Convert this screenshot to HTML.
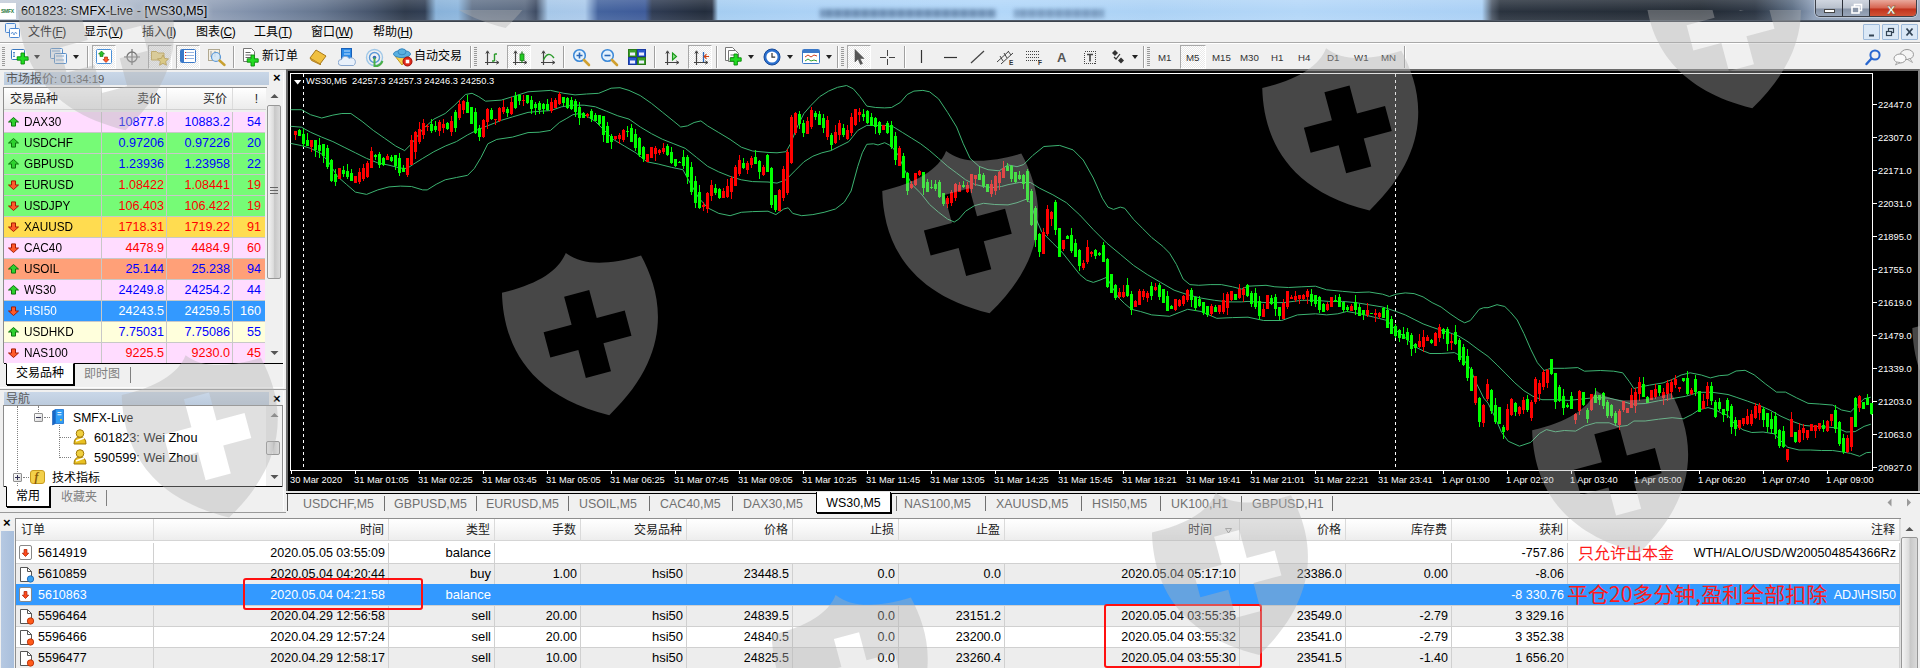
<!DOCTYPE html>
<html lang="zh-CN">
<head>
<meta charset="utf-8">
<title>601823: SMFX-Live - [WS30,M5]</title>
<style>
*{box-sizing:border-box;margin:0;padding:0}
html,body{width:1920px;height:668px;overflow:hidden;background:#f0f0f0}
body{position:relative;font-family:"Liberation Sans","Noto Sans CJK SC",sans-serif;font-size:13px;color:#000}
.abs{position:absolute}
svg{display:block}
/* title bar */
#title{position:absolute;left:0;top:0;width:1920px;height:21px;
 background:linear-gradient(90deg,#c3ccd9 0px,#b4bfd0 100px,#93a1b8 200px,#7a8ba6 260px,#62738d 320px,#43526a 370px,#2a3648 405px,#2c3a50 425px,#86b0d8 436px,#8ab4dc 458px,#5f7088 472px,#58677e 525px,#3a4860 536px,#a4c6e8 548px,#a8c8ea 585px,#40609c 598px,#3a5898 645px,#2b3850 652px,#1e2838 705px,#222c3e 712px,#a3ccf1 718px,#a9d0f5 800px,#b0d6f9 1000px,#aad1f5 1150px,#b2d6f8 1300px,#a8cff5 1482px,#4a5564 1492px,#262f3b 1500px,#1e2630 1700px,#283240 1755px,#56687f 1792px,#8a9cb6 1814px,#9aaac0 1920px)}
#title .gl{position:absolute;left:0;top:0;width:1920px;height:21px;background:linear-gradient(180deg,rgba(255,255,255,.16),rgba(255,255,255,.02) 55%,rgba(255,255,255,.10))}
#title .bl{position:absolute;top:9px;height:9px;background:repeating-linear-gradient(90deg,rgba(40,70,110,.55) 0,rgba(40,70,110,.35) 5px,rgba(40,70,110,.6) 9px);filter:blur(2px)}
#title .ico{position:absolute;left:0;top:3px;width:16px;height:16px;background:#fff}
#title .ico span{position:absolute;left:1px;top:6px;font-size:5px;font-weight:bold;color:#1d7a3c;letter-spacing:-0.3px;line-height:5px}
#title .t{position:absolute;left:21px;top:2px;font-size:12.7px;line-height:18px;color:#000;white-space:nowrap;text-shadow:0 0 6px rgba(255,255,255,.9),0 0 3px rgba(255,255,255,.7)}
#tline{position:absolute;left:0;top:20px;width:1920px;height:2px;background:linear-gradient(180deg,#5c6675,#30363f)}
.capbtns{position:absolute;left:1815px;top:0;width:102px;height:17px;border:1px solid #3c4048;border-top:none;border-radius:0 0 5px 5px;overflow:hidden;box-shadow:0 0 0 1px rgba(255,255,255,.35)}
.capbtns div{position:absolute;top:0;height:17px}
.capbtns .b1{left:0;width:27px;background:linear-gradient(180deg,#d0d6e0,#b8c0cc 48%,#8793a6 52%,#9aa8bc);border-right:1px solid #2c3038}
.capbtns .b2{left:27px;width:27px;background:linear-gradient(180deg,#d0d6e0,#b8c0cc 48%,#8793a6 52%,#9aa8bc);border-right:1px solid #2c3038}
.capbtns .b3{left:54px;width:47px;background:linear-gradient(180deg,#e9a99c,#d6624e 48%,#c0321c 52%,#d4583a)}
/* menu */
#menu{position:absolute;left:0;top:22px;width:1920px;height:21px;background:#f0f0f0;border-bottom:1px solid #a9a9a9}
#menu .mi{position:absolute;top:1px;font-size:12px;line-height:18px;white-space:nowrap}
#menu .mi span{font-size:12px;letter-spacing:-0.5px}
#menu .mi u{text-decoration:underline}
.mdi{position:absolute;top:24px;width:17px;height:16px;border:1px solid #9db9d9;background:#dbe8f6;border-radius:1px}
/* toolbar */
#tb{position:absolute;left:0;top:43px;width:1920px;height:27px;background:#f0f0f0;border-top:1px solid #fff;border-bottom:1px solid #a0a0a0}
.grip{position:absolute;width:3px;background:repeating-linear-gradient(180deg,#9a9a9a 0,#9a9a9a 1px,#f0f0f0 1px,#f0f0f0 2px)}
.tsep{position:absolute;width:2px;border-left:1px solid #a0a0a0;border-right:1px solid #fff}
.pressed{position:absolute;border:1px solid #a8a8a8;background:#e8e8e8;border-right-color:#fff;border-bottom-color:#fff;
 background-image:repeating-conic-gradient(#ffffff 0 25%,#e9e9e9 0 50%);background-size:2px 2px}
.dd{position:absolute;width:0;height:0;border-left:3px solid transparent;border-right:3px solid transparent;border-top:4px solid #222}
.tbt{position:absolute;font-size:12px;line-height:18px;white-space:nowrap}
.tf{position:absolute;top:50.5px;font-size:9.7px;line-height:14px;color:#333;white-space:nowrap}
/* left dock */
.cap{position:absolute;left:4px;width:265px;height:13px;background:linear-gradient(180deg,#c9d7e8,#bccbdd);font-size:12px;line-height:13px;color:#5a5a5a;white-space:nowrap;overflow:visible}
.cap span{position:absolute;left:2px;top:1px}
.cap i{font-style:normal;font-size:11.3px}
.capx{position:absolute;left:273px;font-size:13px;font-weight:bold;line-height:12px;color:#000}
#mwh{position:absolute;left:4px;top:88px;width:262px;height:22px;background:linear-gradient(180deg,#fff,#f3f3f3 60%,#ececec);border-bottom:1px solid #d0d0d0}
#mwh div{position:absolute;top:0;height:21px;line-height:23px;font-size:12px;color:#222;border-right:1px solid #dcdcdc}
.mwr{position:absolute;left:4px;width:261px;height:21px;border-bottom:1px solid #c8c8c8;font-size:12.6px;line-height:20px;white-space:nowrap}
.mwr .ar{position:absolute;left:4px;top:5px}
.mwr .s{position:absolute;left:20px;top:0;display:inline-block;transform:scaleX(.92);transform-origin:0 50%;font-size:12.8px}
.mwr .c{position:absolute;top:0;height:21px;text-align:right;border-left:1px solid #c8c8c8;padding-right:2px}
.mwr .c1{left:97px;width:65px}.mwr .c2{left:162px;width:66px}.mwr .c3{left:228px;width:33px;padding-right:4px}
.sb{position:absolute;background:#f0f0f0}
.thumb{position:absolute;border:1px solid #979797;border-radius:2px;background:linear-gradient(90deg,#f4f4f4,#dcdcdc 45%,#c8c8c8 55%,#dadada)}
.tabs{position:absolute;left:4px;width:279px;height:22px;border-top:1px solid #000;background:#f0f0f0}
.tabs .a{position:absolute;top:-1px;height:22px;background:#fff;border:1px solid #000;border-top:1px solid #fff;font-size:12px;line-height:19px;text-align:center;box-shadow:1px 1px 0 #000}
.tabs .n{position:absolute;top:0;font-size:12px;line-height:20px;color:#808080}
.tabs .v{position:absolute;top:3px;width:1px;height:16px;background:#808080}
#tree{position:absolute;left:4px;top:406px;width:278px;height:80px;background:#fff;overflow:hidden;font-size:13px}
#tree .tx{position:absolute;white-space:nowrap;line-height:16px}
.dot{position:absolute;border-left:1px dotted #808080}
.doth{position:absolute;border-top:1px dotted #808080;height:0}
.box{position:absolute;width:9px;height:9px;border:1px solid #919191;background:linear-gradient(135deg,#fff,#d8d8d8);border-radius:1px}
.box:before{content:"";position:absolute;left:1px;top:3px;width:5px;height:1px;background:#335}
.box.p:after{content:"";position:absolute;left:3px;top:1px;width:1px;height:5px;background:#335}
/* chart */
#chartbg{position:absolute;left:286px;top:69px;width:1634px;height:422px;background:#000;border-left:2px solid #6a6a6a;border-top:2px solid #6a6a6a;border-right:2px solid #8a8a8a}
svg.ch{position:absolute;left:0;top:0}
.ax{font-family:"Liberation Sans",sans-serif;font-size:9.3px;fill:#fff}
/* chart tabs */
#ctabs{position:absolute;left:286px;top:491px;width:1634px;height:23px;background:#f0f0f0;border-top:2px solid #e4e4e4}
#ctabs:after{content:"";position:absolute;left:0;top:0;width:1634px;height:1px;background:#000}
.ctab{position:absolute;top:495.5px;font-size:12.4px;line-height:17px;color:#707070;white-space:nowrap}
.ctab.act{top:492px;height:21px;background:#fff;border:1px solid #000;border-top:none;color:#000;text-align:center;box-shadow:1px 1px 0 #000}
.ctab.act span{position:relative;top:3px}
.csep{position:absolute;top:496px;width:1px;height:15px;background:#707070}
/* terminal */
#term{position:absolute;left:0;top:515px;width:1920px;height:153px;background:#f0f0f0}
.th{position:absolute;top:519px;height:22px;line-height:23px;font-size:12px;color:#222;background:linear-gradient(180deg,#fff,#f6f6f6 55%,#ededed);border-right:1px solid #dadada;border-bottom:1px solid #d5d5d5;white-space:nowrap}
.tr{position:absolute;left:16px;width:1884px;height:21px;border-bottom:1px solid #d0d0d0;font-size:12.5px;line-height:20px;white-space:nowrap}
.tr .tx13{font-size:13px}
.tr.sel .td{border-right-color:transparent}
.td{position:absolute;top:0;height:20px;text-align:right;padding-right:3px;border-right:1px solid #d0d0d0;overflow:visible}
.ti{position:absolute;left:3px;top:2px}
.note{position:absolute;color:#ff1a1a;line-height:20px;white-space:nowrap;font-family:"Noto Sans CJK SC","Liberation Sans",sans-serif}
.rb{position:absolute;border:2px solid #ff1010;border-radius:3px}
svg.wm{position:absolute;left:0;top:0;pointer-events:none}
</style>
</head>
<body>
<!-- title bar -->
<div id="title"><div class="bl" style="left:820px;width:176px"></div><div class="bl" style="left:1014px;width:90px;opacity:.8"></div><div class="gl"></div><div class="ico"><span>SMFX</span></div><div class="t">601823: SMFX-Live - [WS30,M5]</div>
 <div class="capbtns"><div class="b1"></div><div class="b2"></div><div class="b3"></div>
 <svg class="abs" style="left:0;top:0" width="102" height="17" viewBox="0 0 102 17"><rect x="8.5" y="9.5" width="10" height="3" fill="#fff" stroke="#444"/><rect x="38.5" y="4.5" width="7" height="6" fill="none" stroke="#fff" stroke-width="1.6"/><rect x="36" y="7" width="7" height="6" fill="#8a96a8" stroke="#fff" stroke-width="1.6"/><text x="71" y="14" font-family="Liberation Sans,sans-serif" font-weight="bold" font-size="15" fill="#fff" stroke="#552" stroke-width="0.4">x</text></svg></div>
</div>
<div id="tline"></div>
<!-- menu -->
<div id="menu">
 <svg class="abs" style="left:5px;top:1px" width="16" height="16" viewBox="0 0 16 16"><rect x="0.5" y="0.5" width="10" height="9" rx="1" fill="#eaf2fb" stroke="#4a86d0"/><rect x="4.5" y="5.5" width="10" height="9" rx="1" fill="#fff" stroke="#4a86d0"/><path d="M6,11 l1.5,-2 1.5,3 1.5,-3 1.5,2" stroke="#4a86d0" fill="none" stroke-width="0.8"/></svg>
 <div class="mi" style="left:28px">文件<span>(<u>F</u>)</span></div>
 <div class="mi" style="left:84px">显示<span>(<u>V</u>)</span></div>
 <div class="mi" style="left:142px">插入<span>(<u>I</u>)</span></div>
 <div class="mi" style="left:196px">图表<span>(<u>C</u>)</span></div>
 <div class="mi" style="left:254px">工具<span>(<u>T</u>)</span></div>
 <div class="mi" style="left:311px">窗口<span>(<u>W</u>)</span></div>
 <div class="mi" style="left:373px">帮助<span>(<u>H</u>)</span></div>
</div>
<div class="mdi" style="left:1863px"><svg width="15" height="14"><path d="M5,10.5h5" stroke="#345" stroke-width="2"/></svg></div>
<div class="mdi" style="left:1882px"><svg width="15" height="14"><rect x="5.5" y="3.5" width="5" height="4" fill="none" stroke="#345" stroke-width="1.2"/><rect x="3.5" y="6.5" width="5" height="4" fill="#dbe8f6" stroke="#345" stroke-width="1.2"/></svg></div>
<div class="mdi" style="left:1901px"><svg width="15" height="14"><path d="M4.5,3.5l6,7M10.5,3.5l-6,7" stroke="#345" stroke-width="1.8"/></svg></div>
<!-- toolbar -->
<div id="tb"></div>
<div class="grip" style="left:2px;top:47px;height:19px"></div>
<svg style="position:absolute;left:11px;top:48px" width="20" height="18" viewBox="0 0 20 18"><rect x="0.5" y="1.5" width="13" height="10" rx="1" fill="#fff" stroke="#3a78c0"/><path d="M3,4v5M2,5l1,-1l1,1M2,8l1,1l1,-1" stroke="#3a78c0" fill="none" stroke-width="0.8"/><path d="M10,5h3.4v3.8h3.8v3.4h-3.8v3.8h-3.4v-3.8h-3.8v-3.4h3.8z" fill="#22dc22" stroke="#0a8a0a" stroke-width="0.9"/></svg>
<div class="dd" style="left:34px;top:55px"></div>
<svg style="position:absolute;left:50px;top:48px" width="18" height="18" viewBox="0 0 18 18"><rect x="0.5" y="0.5" width="12" height="10" rx="1" fill="#eef4fb" stroke="#5a8fc8"/><rect x="4.5" y="5.5" width="12" height="10" rx="1" fill="#eef4fb" stroke="#5a8fc8"/><path d="M2,3h8M6,8h8M6,12h8" stroke="#5a8fc8" stroke-width="0.8"/></svg>
<div class="dd" style="left:73px;top:55px"></div>
<div class="tsep" style="left:87px;top:46px;height:22px"></div>
<div class="pressed" style="left:92px;top:45px;width:24px;height:24px"></div>
<svg style="position:absolute;left:96px;top:49px" width="17" height="16" viewBox="0 0 17 16"><rect x="0.5" y="0.5" width="15" height="14" rx="1" fill="#fff" stroke="#4a90d8"/><path d="M5.5,2 L8.5,5 H7 V7.5 H4 V5 H2.5 Z" fill="#2ec02e" stroke="#0a700a" stroke-width="0.6"/><path d="M10,13.5 L13,10.5 H11.5 V8 H8.5 V10.5 H7 Z" fill="#ff5a2a" stroke="#a02000" stroke-width="0.6"/></svg>
<svg style="position:absolute;left:124px;top:49px" width="16" height="16" viewBox="0 0 16 16"><circle cx="8" cy="8" r="5" fill="none" stroke="#777" stroke-width="1.3"/><path d="M8,0v16M0,8h16" stroke="#777" stroke-width="1.2"/></svg>
<div class="pressed" style="left:148px;top:45px;width:24px;height:24px"></div>
<svg style="position:absolute;left:151px;top:48px" width="19" height="18" viewBox="0 0 19 18"><path d="M0.5,3.5 h5 l1.5,1.5 h6 v7 h-12.5 z" fill="#f3dc8a" stroke="#c8a84a"/><path d="M12,7 l1.7,3.4 3.8,0.5 -2.8,2.6 0.7,3.7 -3.4,-1.8 -3.4,1.8 0.7,-3.7 -2.8,-2.6 3.8,-0.5z" fill="#f5d96a" stroke="#b8902a" stroke-width="0.8"/></svg>
<div class="pressed" style="left:176px;top:45px;width:24px;height:24px"></div>
<svg style="position:absolute;left:180px;top:49px" width="17" height="15" viewBox="0 0 17 15"><rect x="0.5" y="0.5" width="15" height="13" rx="1" fill="#fff" stroke="#3a78c8"/><rect x="1" y="1" width="3" height="12" fill="#3a78c8"/><path d="M6,3.5h8M6,6.5h8M6,9.5h8" stroke="#7aa0d8" stroke-width="0.8"/><path d="M5,3.5h1M5,6.5h1M5,9.5h1" stroke="#e02020" stroke-width="1"/></svg>
<svg style="position:absolute;left:207px;top:48px" width="20" height="19" viewBox="0 0 20 19"><rect x="1.5" y="1.5" width="11" height="11" fill="#f4f0e6" stroke="#b0a890"/><path d="M4,3v6M8,3v6" stroke="#888" stroke-width="0.8"/><circle cx="9" cy="9" r="4.5" fill="#cfe6fa" fill-opacity="0.8" stroke="#5a98d8" stroke-width="1.2"/><path d="M12.5,12.5 L17.5,17" stroke="#c8a030" stroke-width="2.4" stroke-linecap="round"/></svg>
<div class="tsep" style="left:233px;top:46px;height:22px"></div>
<svg style="position:absolute;left:243px;top:48px" width="18" height="20" viewBox="0 0 18 20"><path d="M0.5,0.5 h8 l3,3 v10 h-11 z" fill="#fff" stroke="#777"/><path d="M2.5,4.5h5M2.5,7h6M2.5,9.5h6" stroke="#555" stroke-width="0.9"/><path d="M8,7h3.4v3.8h3.8v3.4h-3.8v3.8h-3.4v-3.8h-3.8v-3.4h3.8z" fill="#22dc22" stroke="#0a8a0a" stroke-width="0.9"/></svg>
<div class="tbt" style="left:262px;top:47px">新订单</div>
<svg style="position:absolute;left:309px;top:49px" width="18" height="16" viewBox="0 0 18 16"><path d="M1,9 L7,1 L17,7 L11,15 Z" fill="#f0c040" stroke="#a87818"/><path d="M1,9 L2.5,11.5 L12,16 L11,15" fill="#d09828" stroke="#a87818" stroke-width="0.8"/></svg>
<svg style="position:absolute;left:338px;top:48px" width="19" height="19" viewBox="0 0 19 19"><rect x="3.5" y="0.5" width="10" height="12" fill="#2a8ae8" stroke="#1a60b8"/><path d="M6,3h6M6,6h6" stroke="#bfe0ff" stroke-width="1"/><path d="M3,17.5 a3,3 0 0 1 0.5,-6 a4,4 0 0 1 7.5,-1 a3.5,3.5 0 0 1 4.5,7 z" fill="#e8f0fa" stroke="#8aa8d0"/></svg>
<svg style="position:absolute;left:365px;top:48px" width="19" height="19" viewBox="0 0 19 19"><circle cx="9.5" cy="9.5" r="8" fill="none" stroke="#a0c8e8" stroke-width="1.4"/><circle cx="9.5" cy="9.5" r="5" fill="none" stroke="#5a98d8" stroke-width="1.4"/><circle cx="9.5" cy="9.5" r="1.8" fill="#2a60c0"/><path d="M9.5,9.5 V18.5 A9,9 0 0 0 17.5,13" fill="none" stroke="#48b048" stroke-width="2"/></svg>
<svg style="position:absolute;left:393px;top:47px" width="20" height="20" viewBox="0 0 20 20"><path d="M2,9 L9,18 L16,9 Z" fill="#f5d050" stroke="#c09820"/><ellipse cx="9" cy="7" rx="8.5" ry="3.6" fill="#5ab0e0" stroke="#3888c0"/><ellipse cx="9" cy="4.8" rx="4" ry="3" fill="#5ab0e0" stroke="#3888c0"/><circle cx="14.5" cy="14.5" r="4.5" fill="#e02818" stroke="#a01008"/><rect x="12.7" y="12.7" width="3.6" height="3.6" fill="#fff"/></svg>
<div class="tbt" style="left:414px;top:47px">自动交易</div>
<div class="tsep" style="left:470px;top:46px;height:22px"></div>
<div class="grip" style="left:474px;top:47px;height:19px"></div>
<svg style="position:absolute;left:484px;top:49px" width="17" height="17" viewBox="0 0 17 17"><path d="M3.5,2.5V16M1,13.5H14.5" stroke="#444" stroke-width="1.2" fill="none"/><path d="M1.8,4.6L3.5,1.8L5.2,4.6M12.2,11.8L15,13.5L12.2,15.2" stroke="#444" stroke-width="1" fill="none"/><path d="M10.5,5V12M8,12h2.5M10.5,5h2.5" stroke="#2a9a2a" stroke-width="1.4" fill="none"/></svg>
<div class="pressed" style="left:507px;top:45px;width:24px;height:24px"></div>
<svg style="position:absolute;left:512px;top:49px" width="17" height="17" viewBox="0 0 17 17"><path d="M3.5,2.5V16M1,13.5H14.5" stroke="#444" stroke-width="1.2" fill="none"/><path d="M1.8,4.6L3.5,1.8L5.2,4.6M12.2,11.8L15,13.5L12.2,15.2" stroke="#444" stroke-width="1" fill="none"/><path d="M10,2.5V14" stroke="#1a7a1a" stroke-width="1.2"/><rect x="8" y="5" width="4" height="6.5" fill="#22cc22" stroke="#1a7a1a" stroke-width="0.8"/></svg>
<svg style="position:absolute;left:540px;top:49px" width="17" height="17" viewBox="0 0 17 17"><path d="M3.5,2.5V16M1,13.5H14.5" stroke="#444" stroke-width="1.2" fill="none"/><path d="M1.8,4.6L3.5,1.8L5.2,4.6M12.2,11.8L15,13.5L12.2,15.2" stroke="#444" stroke-width="1" fill="none"/><path d="M3.5,11 Q8,1 14,9" stroke="#2a9a2a" stroke-width="1.3" fill="none"/></svg>
<div class="tsep" style="left:563px;top:46px;height:22px"></div>
<svg style="position:absolute;left:572px;top:48px" width="19" height="19" viewBox="0 0 19 19"><circle cx="7.5" cy="7.5" r="5.8" fill="#e4f2fd" stroke="#3a88d8" stroke-width="1.5"/><path d="M4.5,7.5h6M7.5,4.5v6" stroke="#2a68b8" stroke-width="1.6"/><path d="M12,12 L17,17" stroke="#d0a030" stroke-width="2.6" stroke-linecap="round"/></svg>
<svg style="position:absolute;left:600px;top:48px" width="19" height="19" viewBox="0 0 19 19"><circle cx="7.5" cy="7.5" r="5.8" fill="#e4f2fd" stroke="#3a88d8" stroke-width="1.5"/><path d="M4.5,7.5h6" stroke="#2a68b8" stroke-width="1.6"/><path d="M12,12 L17,17" stroke="#d0a030" stroke-width="2.6" stroke-linecap="round"/></svg>
<svg style="position:absolute;left:628px;top:49px" width="18" height="16" viewBox="0 0 18 16"><rect x="0.5" y="0.5" width="8" height="7" fill="#3aa02a" stroke="#2a7a1a"/><rect x="9.5" y="0.5" width="8" height="7" fill="#2a58d0" stroke="#1a3aa0"/><rect x="0.5" y="8.5" width="8" height="7" fill="#2a58d0" stroke="#1a3aa0"/><rect x="9.5" y="8.5" width="8" height="7" fill="#3aa02a" stroke="#2a7a1a"/><rect x="2" y="3.5" width="5" height="3" fill="#eef"/><rect x="11" y="3.5" width="5" height="3" fill="#eef"/><rect x="2" y="11.5" width="5" height="3" fill="#eef"/><rect x="11" y="11.5" width="5" height="3" fill="#eef"/></svg>
<div class="tsep" style="left:654px;top:46px;height:22px"></div>
<svg style="position:absolute;left:664px;top:49px" width="17" height="17" viewBox="0 0 17 17"><path d="M3.5,2.5V16M1,13.5H14.5" stroke="#444" stroke-width="1.2" fill="none"/><path d="M1.8,4.6L3.5,1.8L5.2,4.6M12.2,11.8L15,13.5L12.2,15.2" stroke="#444" stroke-width="1" fill="none"/><path d="M8.5,4 L12.5,7.5 L8.5,11 Z" fill="#8ae08a" stroke="#1a9a1a" stroke-width="1.1"/></svg>
<div class="pressed" style="left:688px;top:45px;width:24px;height:24px"></div>
<svg style="position:absolute;left:693px;top:49px" width="17" height="17" viewBox="0 0 17 17"><path d="M3.5,2.5V16M1,13.5H14.5" stroke="#444" stroke-width="1.2" fill="none"/><path d="M1.8,4.6L3.5,1.8L5.2,4.6M12.2,11.8L15,13.5L12.2,15.2" stroke="#444" stroke-width="1" fill="none"/><path d="M10.5,3V13" stroke="#2a68b8" stroke-width="1.3"/><path d="M16,7.5h-4.5M13.5,5.2l-2.3,2.3l2.3,2.3" stroke="#d04010" fill="none" stroke-width="1.1"/></svg>
<div class="tsep" style="left:716px;top:46px;height:22px"></div>
<svg style="position:absolute;left:725px;top:47px" width="19" height="20" viewBox="0 0 19 20"><path d="M0.5,0.5 h7 l3,3 v10 h-10 z" fill="#fff" stroke="#777"/><path d="M3.5,3.5 h7 l3,3 v8 h-10 z" fill="#fff" stroke="#777"/><path d="M5.5,8h5M5.5,10.5h6" stroke="#666" stroke-width="0.9"/><path d="M9,7h3.4v3.8h3.8v3.4h-3.8v3.8h-3.4v-3.8h-3.8v-3.4h3.8z" fill="#22dc22" stroke="#0a8a0a" stroke-width="0.9"/></svg>
<div class="dd" style="left:748px;top:55px"></div>
<svg style="position:absolute;left:763px;top:48px" width="18" height="18" viewBox="0 0 18 18"><circle cx="9" cy="9" r="8" fill="#2a70d0" stroke="#184a98"/><circle cx="9" cy="9" r="5.6" fill="#fff"/><path d="M9,5v4.2h3.2" stroke="#333" fill="none" stroke-width="1.2"/></svg>
<div class="dd" style="left:787px;top:55px"></div>
<svg style="position:absolute;left:802px;top:49px" width="18" height="16" viewBox="0 0 18 16"><rect x="0.5" y="0.5" width="17" height="14" rx="1" fill="#fff" stroke="#3a78c8"/><rect x="1" y="1" width="16" height="3" fill="#3a78c8"/><path d="M3,8 l3,-2 3,2 3,-2 3,1" stroke="#d04020" fill="none"/><path d="M3,12 l3,-2 3,2 3,-1 3,1" stroke="#30a030" fill="none"/></svg>
<div class="dd" style="left:826px;top:55px"></div>
<div class="tsep" style="left:837px;top:46px;height:22px"></div>
<div class="grip" style="left:841px;top:47px;height:19px"></div>
<div class="pressed" style="left:847px;top:45px;width:24px;height:24px"></div>
<svg style="position:absolute;left:854px;top:49px" width="12" height="17" viewBox="0 0 12 17"><path d="M1,0.5 V13 L4,10 L6.5,15.5 L8.5,14.5 L6,9.5 H10 Z" fill="#555" stroke="#555" stroke-width="0.6"/></svg>
<svg style="position:absolute;left:879px;top:49px" width="16" height="16" viewBox="0 0 16 16"><path d="M8.5,1v6M8.5,10v6M1,8.5h6M10,8.5h6" stroke="#444" stroke-width="1"/></svg>
<div class="tsep" style="left:904px;top:46px;height:22px"></div>
<svg style="position:absolute;left:918px;top:49px" width="8" height="16" viewBox="0 0 8 16"><path d="M3.5,1v13" stroke="#333" stroke-width="1.2"/></svg>
<svg style="position:absolute;left:943px;top:49px" width="16" height="16" viewBox="0 0 16 16"><path d="M1,8.5h13" stroke="#333" stroke-width="1.2"/></svg>
<svg style="position:absolute;left:970px;top:49px" width="16" height="16" viewBox="0 0 16 16"><path d="M1,14L14,2" stroke="#444" stroke-width="1.2"/></svg>
<svg style="position:absolute;left:996px;top:48px" width="20" height="18" viewBox="0 0 20 18"><path d="M1,14L13,3M5,16L17,5M4,8l3,5M8,5l3,5M12,3l3,4" stroke="#444" stroke-width="1" fill="none"/><text x="13" y="17" font-size="6.5" font-family="Liberation Sans,sans-serif" font-weight="bold" fill="#333">E</text></svg>
<svg style="position:absolute;left:1025px;top:48px" width="20" height="18" viewBox="0 0 20 18"><path d="M1,3.5h14M1,6.5h14M1,9.5h14M1,12.5h14" stroke="#444" stroke-width="1" stroke-dasharray="1,1" shape-rendering="crispEdges"/><text x="13" y="17" font-size="6.5" font-family="Liberation Sans,sans-serif" font-weight="bold" fill="#333">F</text></svg>
<div class="tbt" style="left:1057px;top:49px;font-size:13px;font-weight:bold;color:#555">A</div>
<svg style="position:absolute;left:1082px;top:49px" width="16" height="16" viewBox="0 0 16 16"><rect x="2.5" y="2.5" width="11" height="12" fill="none" stroke="#444" stroke-dasharray="1,1" shape-rendering="crispEdges"/><path d="M5,5.5h6M8,5.5v7" stroke="#444" stroke-width="1.6"/></svg>
<svg style="position:absolute;left:1110px;top:49px" width="18" height="16" viewBox="0 0 18 16"><path d="M5,1 L8,4 L5,7 L2,4 Z" fill="#333"/><path d="M11,8.5 L14,11.5 L11,14.5 L8,11.5 Z" fill="#333"/><path d="M4,8l2,2l4,-5" stroke="#333" fill="none" stroke-width="1.2"/></svg>
<div class="dd" style="left:1132px;top:55px"></div>
<div class="tsep" style="left:1143px;top:46px;height:22px"></div>
<div class="grip" style="left:1147px;top:47px;height:19px"></div>
<div class="pressed" style="left:1180px;top:45px;width:26px;height:24px"></div>
<div class="tf" style="left:1158px">M1</div>
<div class="tf" style="left:1186px">M5</div>
<div class="tf" style="left:1212px">M15</div>
<div class="tf" style="left:1240px">M30</div>
<div class="tf" style="left:1271px">H1</div>
<div class="tf" style="left:1298px">H4</div>
<div class="tf" style="left:1327px">D1</div>
<div class="tf" style="left:1354px">W1</div>
<div class="tf" style="left:1381px">MN</div>
<div class="tsep" style="left:1404px;top:46px;height:22px"></div>
<svg style="position:absolute;left:1865px;top:49px" width="17" height="17" viewBox="0 0 17 17"><circle cx="10" cy="6" r="4.6" fill="none" stroke="#2a68d0" stroke-width="2"/><path d="M6.5,9.5L1.5,15" stroke="#2a68d0" stroke-width="2.4" stroke-linecap="round"/></svg>
<svg style="position:absolute;left:1893px;top:48px" width="22" height="18" viewBox="0 0 22 18"><ellipse cx="14" cy="6.5" rx="6.5" ry="5" fill="#f4f4f4" stroke="#999"/><path d="M17,10.5l2.5,4l-5,-3z" fill="#f4f4f4" stroke="#999" stroke-width="0.8"/><ellipse cx="7" cy="10.5" rx="6" ry="4.5" fill="#fafafa" stroke="#999"/><path d="M4,14l-1.5,3l4.5,-2.5z" fill="#fafafa" stroke="#999" stroke-width="0.8"/></svg>
<!-- market watch -->
<div class="cap" style="top:72px"><span>市场报价<i>: 01:34:19</i></span></div>
<div class="capx" style="top:72px">×</div>
<div id="mwh"><div style="left:0;width:98px;padding-left:6px">交易品种</div><div style="left:98px;width:65px;text-align:right;padding-right:5px">卖价</div><div style="left:163px;width:66px;text-align:right;padding-right:5px">买价</div><div style="left:229px;width:33px;text-align:right;padding-right:8px;border-right:none">!</div></div>
<div class="mwr" style="top:112px;background:#ffdcff;color:#0000ff"><svg class="ar" width="11" height="10" viewBox="0 0 11 11" preserveAspectRatio="none"><path d="M5.5,0.5 L10.5,5.5 H7.5 V10 H3.5 V5.5 H0.5 Z" fill="#2fd02f" stroke="#0a6e0a" stroke-width="1"/></svg><span class="s" style="color:#000000">DAX30</span><span class="c c1">10877.8</span><span class="c c2">10883.2</span><span class="c c3">54</span></div>
<div class="mwr" style="top:133px;background:#76fb76;color:#0000ff"><svg class="ar" width="11" height="10" viewBox="0 0 11 11" preserveAspectRatio="none"><path d="M5.5,0.5 L10.5,5.5 H7.5 V10 H3.5 V5.5 H0.5 Z" fill="#2fd02f" stroke="#0a6e0a" stroke-width="1"/></svg><span class="s" style="color:#000000">USDCHF</span><span class="c c1">0.97206</span><span class="c c2">0.97226</span><span class="c c3">20</span></div>
<div class="mwr" style="top:154px;background:#76fb76;color:#0000ff"><svg class="ar" width="11" height="10" viewBox="0 0 11 11" preserveAspectRatio="none"><path d="M5.5,0.5 L10.5,5.5 H7.5 V10 H3.5 V5.5 H0.5 Z" fill="#2fd02f" stroke="#0a6e0a" stroke-width="1"/></svg><span class="s" style="color:#000000">GBPUSD</span><span class="c c1">1.23936</span><span class="c c2">1.23958</span><span class="c c3">22</span></div>
<div class="mwr" style="top:175px;background:#76fb76;color:#ff0000"><svg class="ar" width="11" height="10" viewBox="0 0 11 11" preserveAspectRatio="none"><path d="M5.5,10.5 L10.5,5.5 H7.5 V1 H3.5 V5.5 H0.5 Z" fill="#ff5a2a" stroke="#a01800" stroke-width="1"/></svg><span class="s" style="color:#000000">EURUSD</span><span class="c c1">1.08422</span><span class="c c2">1.08441</span><span class="c c3">19</span></div>
<div class="mwr" style="top:196px;background:#76fb76;color:#ff0000"><svg class="ar" width="11" height="10" viewBox="0 0 11 11" preserveAspectRatio="none"><path d="M5.5,10.5 L10.5,5.5 H7.5 V1 H3.5 V5.5 H0.5 Z" fill="#ff5a2a" stroke="#a01800" stroke-width="1"/></svg><span class="s" style="color:#000000">USDJPY</span><span class="c c1">106.403</span><span class="c c2">106.422</span><span class="c c3">19</span></div>
<div class="mwr" style="top:217px;background:#ffdc50;color:#ff0000"><svg class="ar" width="11" height="10" viewBox="0 0 11 11" preserveAspectRatio="none"><path d="M5.5,10.5 L10.5,5.5 H7.5 V1 H3.5 V5.5 H0.5 Z" fill="#ff5a2a" stroke="#a01800" stroke-width="1"/></svg><span class="s" style="color:#000000">XAUUSD</span><span class="c c1">1718.31</span><span class="c c2">1719.22</span><span class="c c3">91</span></div>
<div class="mwr" style="top:238px;background:#ffdcff;color:#ff0000"><svg class="ar" width="11" height="10" viewBox="0 0 11 11" preserveAspectRatio="none"><path d="M5.5,10.5 L10.5,5.5 H7.5 V1 H3.5 V5.5 H0.5 Z" fill="#ff5a2a" stroke="#a01800" stroke-width="1"/></svg><span class="s" style="color:#000000">CAC40</span><span class="c c1">4478.9</span><span class="c c2">4484.9</span><span class="c c3">60</span></div>
<div class="mwr" style="top:259px;background:#ffa078;color:#0000ff"><svg class="ar" width="11" height="10" viewBox="0 0 11 11" preserveAspectRatio="none"><path d="M5.5,0.5 L10.5,5.5 H7.5 V10 H3.5 V5.5 H0.5 Z" fill="#2fd02f" stroke="#0a6e0a" stroke-width="1"/></svg><span class="s" style="color:#000000">USOIL</span><span class="c c1">25.144</span><span class="c c2">25.238</span><span class="c c3">94</span></div>
<div class="mwr" style="top:280px;background:#ffdcff;color:#0000ff"><svg class="ar" width="11" height="10" viewBox="0 0 11 11" preserveAspectRatio="none"><path d="M5.5,0.5 L10.5,5.5 H7.5 V10 H3.5 V5.5 H0.5 Z" fill="#2fd02f" stroke="#0a6e0a" stroke-width="1"/></svg><span class="s" style="color:#000000">WS30</span><span class="c c1">24249.8</span><span class="c c2">24254.2</span><span class="c c3">44</span></div>
<div class="mwr" style="top:301px;background:#3399ff;color:#ffffff"><svg class="ar" width="11" height="10" viewBox="0 0 11 11" preserveAspectRatio="none"><path d="M5.5,10.5 L10.5,5.5 H7.5 V1 H3.5 V5.5 H0.5 Z" fill="#ff5a2a" stroke="#a01800" stroke-width="1"/></svg><span class="s" style="color:#ffffff">HSI50</span><span class="c c1">24243.5</span><span class="c c2">24259.5</span><span class="c c3">160</span></div>
<div class="mwr" style="top:322px;background:#ffffdc;color:#0000ff"><svg class="ar" width="11" height="10" viewBox="0 0 11 11" preserveAspectRatio="none"><path d="M5.5,0.5 L10.5,5.5 H7.5 V10 H3.5 V5.5 H0.5 Z" fill="#2fd02f" stroke="#0a6e0a" stroke-width="1"/></svg><span class="s" style="color:#000000">USDHKD</span><span class="c c1">7.75031</span><span class="c c2">7.75086</span><span class="c c3">55</span></div>
<div class="mwr" style="top:343px;background:#ffdcff;color:#ff0000"><svg class="ar" width="11" height="10" viewBox="0 0 11 11" preserveAspectRatio="none"><path d="M5.5,10.5 L10.5,5.5 H7.5 V1 H3.5 V5.5 H0.5 Z" fill="#ff5a2a" stroke="#a01800" stroke-width="1"/></svg><span class="s" style="color:#000000">NAS100</span><span class="c c1">9225.5</span><span class="c c2">9230.0</span><span class="c c3">45</span></div>
<div class="sb" style="left:267px;top:88px;width:15px;height:275px"></div>
<svg class="abs" style="left:270px;top:93px" width="9" height="6"><path d="M0.5,5 L4.5,1 L8.5,5 Z" fill="#555"/></svg>
<svg class="abs" style="left:270px;top:350px" width="9" height="6"><path d="M0.5,1 L4.5,5 L8.5,1 Z" fill="#555"/></svg>
<div class="thumb" style="left:267px;top:105px;width:14px;height:174px"></div>
<div class="abs" style="left:270px;top:187px;width:8px;height:7px;background:repeating-linear-gradient(180deg,#666 0,#666 1px,transparent 1px,transparent 3px)"></div>
<div class="tabs" style="top:363px"><div class="a" style="left:2px;width:68px">交易品种</div><div class="n" style="left:80px">即时图</div><div class="v" style="left:126px"></div></div>
<!-- navigator -->
<div class="cap" style="top:392px"><span>导航</span></div>
<div class="capx" style="top:393px">×</div>
<div id="tree">
 <div class="dot" style="left:13px;top:0;height:80px"></div>
 <div class="dot" style="left:34px;top:0;height:8px"></div>
 <div class="box" style="left:30px;top:7px"></div><div class="doth" style="left:40px;top:11px;width:6px"></div>
 <svg class="abs" style="left:48px;top:3px" width="13" height="17" viewBox="0 0 13 17"><path d="M0.5,2 L3.5,0.5 V14.5 L0.5,16 Z" fill="#1668c8" stroke="#1458b0" stroke-width="0.6"/><path d="M3.5,0.5 H11.5 V14.5 H3.5 Z" fill="#2f9df5" stroke="#1a70d0" stroke-width="0.8"/><path d="M5.5,3.5h4M5.5,5.8h4" stroke="#e8f4ff" stroke-width="1.1"/><rect x="8" y="10" width="1.8" height="1.8" fill="#f5c830"/></svg>
 <div class="tx" style="left:69px;top:4px;font-size:12.2px">SMFX-Live</div>
 <div class="dot" style="left:55px;top:19px;height:33px"></div>
 <div class="doth" style="left:56px;top:31px;width:11px"></div><div class="doth" style="left:56px;top:51px;width:11px"></div>
 <svg class="abs" style="left:69px;top:23px" width="14" height="16" viewBox="0 0 14 16"><path d="M1,15 Q1,8 7,8 Q13,8 13,15 Z" fill="#e8c020" stroke="#a07808"/><circle cx="7" cy="4.5" r="3.8" fill="#f0d040" stroke="#a07808"/><path d="M3,12 l8,-3" stroke="#fff" stroke-width="1.5"/></svg>
 <div class="tx" style="left:90px;top:24px;font-size:12.7px">601823: Wei Zhou</div>
 <svg class="abs" style="left:69px;top:43px" width="14" height="16" viewBox="0 0 14 16"><path d="M1,15 Q1,8 7,8 Q13,8 13,15 Z" fill="#e8c020" stroke="#a07808"/><circle cx="7" cy="4.5" r="3.8" fill="#f0d040" stroke="#a07808"/><path d="M3,12 l8,-3" stroke="#fff" stroke-width="1.5"/></svg>
 <div class="tx" style="left:90px;top:44px;font-size:12.7px">590599: Wei Zhou</div>
 <div class="box p" style="left:9px;top:67px"></div><div class="doth" style="left:19px;top:71px;width:6px"></div>
 <svg class="abs" style="left:26px;top:64px" width="15" height="15" viewBox="0 0 15 15"><rect x="0.5" y="0.5" width="14" height="13" rx="2.5" fill="#f3d04a" stroke="#c89c20"/><text x="4.6" y="10.6" font-family="Liberation Serif,serif" font-style="italic" font-weight="bold" font-size="11.5" fill="#8a5a08">f</text></svg>
 <div class="tx" style="left:48px;top:64px;font-size:12px">技术指标</div>
 <div class="sb" style="left:262px;top:0;width:16px;height:80px"></div>
 <svg class="abs" style="left:266px;top:6px" width="9" height="6"><path d="M0.5,5 L4.5,1 L8.5,5 Z" fill="#777"/></svg>
 <svg class="abs" style="left:266px;top:68px" width="9" height="6"><path d="M0.5,1 L4.5,5 L8.5,1 Z" fill="#555"/></svg>
 <div class="thumb" style="left:262px;top:35px;width:14px;height:14px"></div>
</div>
<div class="tabs" style="top:486px"><div class="a" style="left:2px;width:44px;height:21px">常用</div><div class="n" style="left:57px">收藏夹</div><div class="v" style="left:102px"></div></div>
<!-- dock lines -->
<div class="abs" style="left:0;top:389px;width:286px;height:1px;background:#9a9a9a"></div>
<div class="abs" style="left:0;top:387px;width:284px;height:1px;background:#fcfcfc"></div>
<div class="abs" style="left:283px;top:72px;width:1px;height:316px;background:#fcfcfc"></div>
<div class="abs" style="left:283px;top:391px;width:1px;height:120px;background:#fcfcfc"></div>
<div class="abs" style="left:0;top:512px;width:286px;height:1px;background:#9a9a9a"></div>
<div class="abs" style="left:3px;top:405px;width:280px;height:82px;border:1px solid #8c8c8c;border-bottom:none"></div>
<div class="abs" style="left:3px;top:87px;width:264px;height:276px;border:1px solid #8c8c8c;border-bottom:none;border-right:none"></div>
<!-- chart -->
<div id="chartbg"></div>
<svg class="ch" width="1920" height="668" viewBox="0 0 1920 668">
<path d="M290.5,470.5 V73.5 H1872.5 V470.5 Z" fill="none" stroke="#fff" stroke-width="1" shape-rendering="crispEdges"/>
<path d="M303.5,74V470M1395.5,74V470" stroke="#fff" stroke-width="1" stroke-dasharray="3,3" shape-rendering="crispEdges"/>
<path d="M294,80h7.4l-3.7,4.5z" fill="#fff"/>
<text x="306" y="84" class="ax">WS30,M5&#160; 24257.3 24257.3 24246.3 24250.3</text>
<path d="M290.7,109.7 L301.5,109.7 L310.5,114.7 L321.7,118.0 L332.9,115.1 L341.9,113.5 L350.9,113.5 L362.1,121.4 L373.3,130.4 L384.5,138.2 L395.8,146.1 L404.7,150.6 L411.5,143.8 L422.7,129.2 L433.9,119.1 L445.2,113.5 L454.1,105.7 L465.4,94.5 L472.1,93.3 L478.8,96.7 L485.6,101.2 L501.3,100.1 L512.5,96.7 L528.0,91.8 L550.5,90.4 L563.9,93.3 L575.1,94.9 L586.4,94.0 L598.7,93.3 L611.1,88.2 L620.0,87.7 L629.0,90.4 L640.3,95.6 L651.5,103.4 L662.7,112.4 L673.9,121.4 L680.7,127.0 L687.4,125.9 L694.1,122.5 L700.9,120.9 L707.6,125.9 L718.8,132.6 L730.1,139.4 L741.3,147.2 L752.5,151.0 L768.0,152.4 L777.0,152.8 L786.0,151.7 L790.5,143.8 L797.2,127.0 L803.9,113.5 L810.7,105.7 L819.6,96.7 L828.6,91.1 L837.6,87.3 L846.6,85.5 L853.3,88.8 L860.0,96.7 L866.8,106.1 L875.8,107.5 L884.7,107.9 L891.5,107.5 L900.5,102.3 L907.2,94.5 L913.9,91.1 L922.9,90.4 L929.6,91.8 L938.6,98.9 L947.6,112.4 L956.6,127.0 L963.3,143.8 L970.1,158.4 L979.0,166.3 L988.0,169.7 L999.2,170.8 L1008.0,164.9 L1017.0,166.7 L1023.7,164.5 L1032.7,155.5 L1043.9,146.5 L1059.6,145.4 L1073.1,149.9 L1083.2,160.0 L1093.3,178.0 L1102.3,198.2 L1107.9,207.1 L1113.5,209.4 L1120.3,207.1 L1124.7,208.3 L1133.7,219.5 L1142.7,228.5 L1151.7,237.5 L1162.9,246.4 L1169.6,253.2 L1176.4,264.4 L1183.1,279.0 L1189.9,284.6 L1198.8,285.3 L1210.1,284.6 L1221.3,284.6 L1232.5,286.8 L1241.5,289.1 L1248.0,286.2 L1266.0,285.3 L1274.9,286.8 L1288.4,287.5 L1301.9,286.8 L1315.4,286.2 L1326.6,289.8 L1342.3,291.3 L1355.8,292.5 L1369.2,292.0 L1382.7,294.2 L1389.4,296.5 L1396.2,294.2 L1405.2,292.9 L1414.1,293.6 L1423.1,296.9 L1432.1,302.6 L1441.1,307.0 L1450.1,313.8 L1459.0,319.8 L1464.7,322.8 L1470.3,320.5 L1474.8,314.9 L1479.2,309.3 L1483.7,307.7 L1488.0,307.7 L1497.0,304.7 L1504.8,306.5 L1510.5,312.1 L1517.2,320.0 L1523.9,333.5 L1530.7,349.2 L1537.4,362.7 L1544.1,370.5 L1550.9,368.3 L1564.3,368.3 L1577.8,367.6 L1584.5,371.2 L1600.3,370.5 L1613.7,371.2 L1622.7,372.8 L1629.4,381.7 L1633.9,388.5 L1640.7,386.9 L1649.6,385.1 L1663.1,382.9 L1672.1,379.5 L1681.1,375.0 L1690.1,372.8 L1701.3,375.0 L1710.3,377.9 L1719.2,375.7 L1728.0,375.0 L1736.1,371.0 L1745.1,370.3 L1754.1,374.8 L1765.3,383.8 L1776.5,392.1 L1785.5,392.1 L1796.7,397.9 L1808.0,403.3 L1819.2,404.0 L1832.7,405.1 L1841.6,410.0 L1850.6,411.8 L1857.4,405.1 L1864.1,398.8 L1870.8,397.2" fill="none" stroke="#3cb371" stroke-width="1"/>
<path d="M290.7,126.3 L301.5,127.2 L310.5,132.2 L321.7,137.1 L332.9,141.6 L344.1,147.2 L355.4,152.8 L366.6,158.4 L377.8,162.9 L389.0,165.2 L400.3,168.1 L407.0,168.5 L413.7,164.0 L422.7,158.4 L433.9,151.7 L445.2,146.1 L456.4,141.6 L467.6,134.9 L478.8,129.2 L490.1,124.8 L501.3,120.3 L512.5,116.9 L528.0,112.4 L539.2,111.3 L550.5,110.6 L561.7,106.8 L572.9,105.2 L584.1,105.2 L595.4,106.8 L606.6,111.3 L617.8,115.8 L629.0,119.1 L640.3,127.0 L651.5,133.7 L662.7,139.4 L673.9,143.8 L685.2,148.3 L696.4,157.3 L707.6,166.3 L718.8,171.9 L730.1,176.4 L741.3,179.8 L752.5,181.6 L768.0,182.0 L777.0,183.1 L786.0,179.8 L794.9,170.8 L803.9,161.8 L812.9,156.2 L821.9,152.8 L830.9,150.6 L839.8,146.1 L848.8,141.6 L857.8,130.4 L866.8,125.4 L875.8,125.4 L884.7,125.4 L893.7,127.0 L902.7,132.6 L911.7,138.2 L920.7,143.8 L929.6,150.6 L938.6,158.4 L947.6,166.3 L956.6,173.0 L965.6,179.8 L974.5,184.3 L983.5,186.5 L992.5,187.6 L1001.5,186.5 L1008.0,184.7 L1019.2,182.5 L1030.5,182.5 L1039.4,188.1 L1052.9,194.8 L1066.4,202.7 L1079.8,215.0 L1093.3,229.6 L1106.8,243.1 L1120.3,254.3 L1133.7,265.5 L1147.2,274.5 L1160.7,282.4 L1174.1,290.2 L1187.6,294.7 L1201.1,298.1 L1214.5,300.3 L1228.0,301.9 L1241.5,301.9 L1248.0,301.4 L1266.0,302.6 L1283.9,302.6 L1301.9,300.3 L1315.4,300.3 L1328.8,301.4 L1342.3,301.4 L1355.8,302.6 L1369.2,304.8 L1382.7,307.0 L1396.2,311.5 L1405.2,314.9 L1414.1,319.4 L1423.1,323.9 L1432.1,327.2 L1441.1,330.2 L1450.1,332.9 L1459.0,336.2 L1468.0,341.8 L1477.0,348.6 L1488.0,356.4 L1497.0,364.9 L1506.0,373.9 L1514.9,382.9 L1523.9,390.7 L1532.9,396.3 L1541.9,399.7 L1555.4,399.7 L1568.8,400.4 L1582.3,399.0 L1595.8,397.5 L1609.2,398.1 L1622.7,401.3 L1631.7,404.2 L1645.2,403.5 L1658.6,400.8 L1672.1,398.6 L1685.6,396.3 L1699.0,392.3 L1712.5,392.3 L1728.0,394.5 L1736.1,397.2 L1747.4,401.1 L1758.6,405.1 L1769.8,410.0 L1781.0,416.3 L1792.3,421.3 L1803.5,425.3 L1814.7,426.4 L1828.2,427.1 L1837.2,428.0 L1846.1,432.0 L1855.1,431.6 L1864.1,426.4 L1870.8,424.2" fill="none" stroke="#3cb371" stroke-width="1"/>
<path d="M290.7,143.4 L301.5,145.6 L310.5,148.3 L321.7,153.9 L328.4,161.8 L337.4,176.4 L346.4,184.3 L355.4,192.1 L366.6,194.4 L377.8,189.9 L389.0,186.9 L400.3,186.1 L411.5,186.5 L422.7,189.9 L427.2,189.9 L436.2,184.3 L445.2,179.8 L456.4,177.5 L467.6,175.3 L474.3,168.5 L481.1,157.3 L487.8,143.8 L496.8,139.4 L512.5,137.1 L528.0,132.6 L539.2,132.2 L550.5,130.4 L559.4,122.5 L566.2,118.7 L572.9,114.7 L579.6,113.5 L586.4,115.8 L595.4,121.4 L604.3,130.4 L613.3,139.4 L624.5,146.1 L635.8,152.8 L647.0,161.8 L658.2,164.0 L671.7,167.4 L682.9,169.7 L689.6,182.0 L698.6,197.7 L707.6,207.8 L718.8,213.4 L730.1,215.7 L741.3,212.3 L752.5,211.6 L768.0,211.2 L775.9,214.6 L783.7,209.0 L788.2,207.8 L792.7,213.4 L801.7,215.7 L812.9,214.6 L824.1,212.3 L835.4,209.0 L844.3,202.2 L851.1,191.0 L857.8,166.3 L862.3,152.8 L866.8,144.3 L873.5,143.8 L878.0,145.0 L884.7,142.7 L891.5,146.1 L898.2,155.1 L905.0,170.8 L911.7,184.3 L920.7,193.2 L929.6,204.5 L938.6,212.3 L947.6,219.1 L954.3,222.0 L958.8,219.1 L965.6,211.2 L974.5,205.6 L983.5,203.3 L994.8,204.5 L1008.0,204.9 L1017.0,202.7 L1026.0,199.3 L1030.5,202.7 L1034.9,216.1 L1041.7,231.8 L1052.9,243.1 L1061.9,252.0 L1070.9,263.3 L1079.8,274.5 L1086.6,280.1 L1093.3,282.4 L1100.0,280.1 L1106.8,277.2 L1111.3,285.7 L1118.0,297.0 L1124.7,303.7 L1131.5,309.3 L1140.5,311.5 L1151.7,314.9 L1169.6,316.3 L1187.6,309.3 L1201.1,311.5 L1216.8,318.3 L1232.5,317.6 L1248.0,317.2 L1263.7,320.5 L1281.7,320.5 L1297.4,314.9 L1315.4,313.8 L1326.6,314.9 L1337.8,313.8 L1346.8,311.5 L1360.3,313.8 L1373.7,317.1 L1387.2,320.5 L1396.2,330.6 L1405.2,337.4 L1414.1,346.3 L1423.1,350.8 L1429.9,353.5 L1441.1,353.5 L1454.5,352.6 L1461.3,356.4 L1470.3,368.8 L1477.0,384.5 L1483.7,398.0 L1488.0,403.1 L1494.7,416.5 L1501.5,432.3 L1508.2,441.2 L1519.4,446.2 L1530.7,442.4 L1539.6,433.4 L1546.4,429.6 L1555.4,431.8 L1564.3,430.5 L1575.6,431.1 L1584.5,426.0 L1595.8,422.8 L1609.2,422.8 L1618.2,426.6 L1627.2,425.5 L1633.9,421.0 L1645.2,421.0 L1658.6,419.2 L1672.1,417.7 L1683.3,418.8 L1692.3,414.3 L1699.0,409.8 L1708.0,407.6 L1714.8,409.4 L1721.5,413.2 L1728.0,415.4 L1733.9,423.1 L1742.9,429.8 L1751.8,432.5 L1763.1,432.0 L1774.3,433.8 L1781.0,441.0 L1787.8,447.3 L1799.0,450.0 L1810.2,450.0 L1821.4,450.5 L1832.7,450.5 L1841.6,451.8 L1850.6,453.4 L1859.6,456.3 L1866.3,452.7 L1870.8,452.3" fill="none" stroke="#3cb371" stroke-width="1"/>
<path d="M295.5,131V140M311.5,140V152M339.5,168V179M355.5,176V183M359.5,168V184M363.5,164V181M367.5,161V178M371.5,147V168M387.5,154V160M407.5,158V177M411.5,135V165M415.5,131V159M419.5,122V144M423.5,119V139M427.5,124V131M439.5,120V136M443.5,119V133M451.5,116V136M459.5,100V120M463.5,100V114M483.5,119V138M487.5,108V129M495.5,119V125M499.5,107V122M503.5,100V114M511.5,97V115M523.5,95V106M551.5,98V113M555.5,98V108M559.5,92V105M587.5,113V118M615.5,136V140M619.5,133V144M623.5,129V142M647.5,154V162M651.5,147V158M655.5,146V161M659.5,149V155M663.5,143V154M703.5,202V211M707.5,192V213M711.5,180V201M723.5,188V198M727.5,179V198M731.5,176V199M735.5,165V186M739.5,155V176M747.5,161V174M751.5,156V168M763.5,165V176M779.5,189V211M783.5,166V201M787.5,149V195M791.5,115V164M795.5,112V135M807.5,117V134M811.5,107V129M827.5,116V140M835.5,125V144M839.5,120V140M847.5,125V140M851.5,113V136M855.5,109V126M859.5,108V122M883.5,125V130M899.5,146V166M911.5,181V189M915.5,173V186M919.5,170V176M947.5,196V208M951.5,190V206M955.5,183V201M959.5,182V192M967.5,182V193M971.5,174V193M975.5,175V186M991.5,180V197M995.5,175V195M999.5,171V190M1003.5,161V178M1043.5,228V254M1047.5,205V236M1051.5,211V226M1063.5,240V251M1083.5,260V270M1087.5,240V264M1091.5,251V257M1119.5,288V299M1123.5,285V298M1135.5,300V307M1139.5,289V305M1143.5,289V300M1147.5,291V302M1155.5,283V291M1175.5,299V311M1179.5,299V307M1183.5,295V306M1187.5,289V302M1211.5,304V316M1219.5,305V314M1223.5,293V314M1227.5,292V315M1231.5,291V301M1239.5,284V299M1243.5,287V302M1263.5,304V317M1267.5,295V309M1283.5,299V319M1287.5,291V309M1291.5,295V299M1295.5,291V302M1299.5,295V304M1303.5,294V300M1307.5,289V304M1327.5,302V311M1331.5,297V307M1351.5,304V311M1367.5,303V317M1375.5,309V322M1379.5,312V319M1419.5,334V348M1423.5,330V352M1427.5,335V341M1435.5,332V346M1439.5,324V342M1451.5,334V350M1475.5,376V405M1483.5,404V427M1487.5,379V401M1507.5,404V431M1511.5,398V416M1519.5,406V416M1523.5,397V414M1531.5,400V421M1535.5,377V404M1539.5,380V401M1543.5,370V390M1547.5,369V388M1575.5,413V424M1579.5,390V415M1591.5,394V411M1619.5,409V430M1623.5,401V412M1627.5,408V413M1631.5,388V408M1635.5,388V413M1639.5,377V401M1651.5,390V400M1655.5,384V399M1663.5,388V405M1667.5,380V401M1671.5,379V399M1675.5,375V388M1679.5,387V392M1691.5,388V395M1703.5,394V409M1707.5,382V406M1739.5,420V430M1743.5,418V426M1747.5,409V425M1751.5,410V426M1755.5,403V419M1759.5,403V420M1787.5,449V462M1791.5,412V437M1799.5,423V443M1803.5,424V440M1807.5,430V440M1811.5,424V431M1815.5,425V438M1819.5,423V431M1827.5,420V432M1831.5,414V426M1847.5,435V453M1851.5,417V451M1859.5,395V412" stroke="#ff0000" fill="none" stroke-width="1" shape-rendering="crispEdges"/>
<path d="M294,131h3V135h-3zM310,140h3V147h-3zM338,168h3V179h-3zM354,176h3V183h-3zM358,172h3V182h-3zM362,168h3V179h-3zM366,163h3V177h-3zM370,151h3V168h-3zM386,156h3V160h-3zM406,158h3V175h-3zM410,140h3V165h-3zM414,132h3V152h-3zM418,129h3V142h-3zM422,123h3V135h-3zM426,126h3V127h-3zM438,122h3V131h-3zM442,124h3V128h-3zM450,121h3V132h-3zM458,104h3V118h-3zM462,101h3V110h-3zM482,120h3V137h-3zM486,109h3V122h-3zM494,119h3V120h-3zM498,108h3V121h-3zM502,107h3V112h-3zM510,102h3V114h-3zM522,100h3V101h-3zM550,102h3V111h-3zM554,100h3V108h-3zM558,94h3V104h-3zM586,114h3V116h-3zM614,136h3V139h-3zM618,135h3V139h-3zM622,130h3V140h-3zM646,154h3V162h-3zM650,147h3V158h-3zM654,148h3V154h-3zM658,150h3V153h-3zM662,148h3V152h-3zM702,205h3V207h-3zM706,193h3V209h-3zM710,185h3V196h-3zM722,191h3V198h-3zM726,186h3V197h-3zM730,178h3V192h-3zM734,167h3V186h-3zM738,160h3V174h-3zM746,163h3V170h-3zM750,158h3V165h-3zM762,167h3V175h-3zM778,190h3V211h-3zM782,169h3V198h-3zM786,152h3V193h-3zM790,117h3V163h-3zM794,113h3V133h-3zM806,121h3V134h-3zM810,110h3V127h-3zM826,120h3V137h-3zM834,132h3V143h-3zM838,123h3V135h-3zM846,130h3V139h-3zM850,117h3V133h-3zM854,109h3V125h-3zM858,112h3V115h-3zM882,125h3V130h-3zM898,148h3V166h-3zM910,184h3V188h-3zM914,173h3V185h-3zM918,171h3V175h-3zM946,198h3V204h-3zM950,192h3V203h-3zM954,184h3V198h-3zM958,185h3V192h-3zM966,185h3V192h-3zM970,174h3V189h-3zM974,175h3V179h-3zM990,184h3V194h-3zM994,176h3V191h-3zM998,172h3V183h-3zM1002,168h3V178h-3zM1042,232h3V254h-3zM1046,209h3V234h-3zM1050,212h3V219h-3zM1062,240h3V249h-3zM1082,263h3V268h-3zM1086,247h3V262h-3zM1090,252h3V254h-3zM1118,292h3V297h-3zM1122,292h3V297h-3zM1134,301h3V307h-3zM1138,291h3V305h-3zM1142,291h3V297h-3zM1146,293h3V298h-3zM1154,287h3V290h-3zM1174,299h3V310h-3zM1178,300h3V306h-3zM1182,296h3V304h-3zM1186,290h3V300h-3zM1210,306h3V314h-3zM1218,305h3V312h-3zM1222,300h3V312h-3zM1226,294h3V308h-3zM1230,291h3V300h-3zM1238,289h3V298h-3zM1242,289h3V295h-3zM1262,309h3V317h-3zM1266,295h3V309h-3zM1282,303h3V319h-3zM1286,291h3V307h-3zM1290,297h3V299h-3zM1294,296h3V300h-3zM1298,295h3V299h-3zM1302,295h3V299h-3zM1306,291h3V297h-3zM1326,304h3V310h-3zM1330,297h3V307h-3zM1350,306h3V311h-3zM1366,310h3V315h-3zM1374,313h3V315h-3zM1378,313h3V317h-3zM1418,341h3V347h-3zM1422,337h3V347h-3zM1426,337h3V341h-3zM1434,333h3V346h-3zM1438,327h3V338h-3zM1450,341h3V343h-3zM1474,376h3V403h-3zM1482,405h3V423h-3zM1486,384h3V399h-3zM1506,409h3V430h-3zM1510,399h3V415h-3zM1518,407h3V414h-3zM1522,400h3V410h-3zM1530,402h3V418h-3zM1534,379h3V402h-3zM1538,383h3V394h-3zM1542,372h3V387h-3zM1546,370h3V383h-3zM1574,414h3V420h-3zM1578,391h3V411h-3zM1590,394h3V410h-3zM1618,411h3V425h-3zM1622,401h3V410h-3zM1626,408h3V413h-3zM1630,395h3V408h-3zM1634,392h3V406h-3zM1638,382h3V394h-3zM1650,390h3V400h-3zM1654,389h3V397h-3zM1662,392h3V398h-3zM1666,383h3V394h-3zM1670,382h3V392h-3zM1674,379h3V385h-3zM1678,387h3V389h-3zM1690,390h3V394h-3zM1702,401h3V409h-3zM1706,386h3V399h-3zM1738,420h3V428h-3zM1742,418h3V424h-3zM1746,416h3V424h-3zM1750,414h3V424h-3zM1754,406h3V418h-3zM1758,405h3V413h-3zM1786,449h3V460h-3zM1790,419h3V437h-3zM1798,430h3V442h-3zM1802,428h3V433h-3zM1806,430h3V438h-3zM1810,424h3V431h-3zM1814,425h3V431h-3zM1818,423h3V429h-3zM1826,421h3V431h-3zM1830,414h3V421h-3zM1846,438h3V452h-3zM1850,417h3V447h-3zM1858,396h3V408h-3z" fill="#ff0000" stroke="none" shape-rendering="crispEdges"/>
<path d="M299.5,129V136M303.5,129V147M307.5,133V146M315.5,140V157M319.5,138V158M323.5,144V163M327.5,145V169M331.5,159V182M335.5,169V186M343.5,166V177M347.5,164V179M351.5,169V181M375.5,154V160M379.5,152V168M383.5,157V166M391.5,155V162M395.5,155V170M399.5,153V176M403.5,165V172M431.5,119V133M435.5,121V132M447.5,122V130M455.5,110V132M467.5,95V113M471.5,107V124M475.5,108V134M479.5,125V141M491.5,108V120M507.5,107V117M515.5,92V109M519.5,94V105M527.5,95V104M531.5,96V114M535.5,102V115M539.5,101V114M543.5,103V114M547.5,99V111M563.5,97V106M567.5,97V109M571.5,97V110M575.5,99V117M579.5,102V125M583.5,112V118M591.5,109V122M595.5,113V121M599.5,115V126M603.5,116V142M607.5,122V143M611.5,134V149M627.5,126V137M631.5,124V142M635.5,129V151M639.5,137V157M643.5,146V162M667.5,144V156M671.5,147V164M675.5,159V167M679.5,161V163M683.5,150V169M687.5,155V184M691.5,162V195M695.5,176V208M699.5,185V209M715.5,184V195M719.5,188V199M743.5,158V169M755.5,150V164M759.5,160V179M767.5,154V172M771.5,167V208M775.5,195V212M799.5,111V129M803.5,120V137M815.5,111V120M819.5,111V125M823.5,114V133M831.5,133V150M843.5,124V137M863.5,109V121M867.5,110V124M871.5,113V126M875.5,117V134M879.5,121V135M887.5,121V134M891.5,121V149M895.5,132V165M903.5,153V178M907.5,172V195M923.5,172V195M927.5,179V192M931.5,180V189M935.5,180V191M939.5,180V198M943.5,193V206M963.5,181V188M979.5,167V180M983.5,173V188M987.5,184V192M1007.5,163V171M1011.5,165V182M1015.5,172V183M1019.5,171V180M1023.5,174V189M1027.5,169V202M1031.5,189V226M1035.5,206V247M1039.5,233V257M1055.5,200V235M1059.5,228V257M1067.5,235V239M1071.5,228V253M1075.5,239V257M1079.5,249V271M1095.5,249V259M1099.5,252V256M1103.5,242V262M1107.5,258V288M1111.5,274V293M1115.5,284V300M1127.5,278V297M1131.5,291V315M1151.5,282V300M1159.5,283V300M1163.5,289V303M1167.5,291V311M1171.5,305V309M1191.5,288V307M1195.5,296V311M1199.5,296V307M1203.5,302V315M1207.5,306V317M1215.5,305V312M1235.5,294V300M1247.5,284V297M1251.5,291V307M1255.5,288V309M1259.5,296V320M1271.5,295V305M1275.5,294V316M1279.5,307V320M1311.5,289V306M1315.5,295V307M1319.5,296V313M1323.5,303V312M1335.5,295V302M1339.5,294V307M1343.5,302V312M1347.5,305V312M1355.5,295V315M1359.5,304V316M1363.5,310V320M1371.5,313V314M1383.5,307V318M1387.5,305V328M1391.5,316V334M1395.5,324V338M1399.5,329V342M1403.5,327V339M1407.5,328V345M1411.5,333V356M1415.5,343V353M1431.5,339V344M1443.5,328V339M1447.5,327V351M1455.5,325V345M1459.5,338V362M1463.5,344V366M1467.5,349V381M1471.5,367V391M1479.5,397V427M1491.5,389V414M1495.5,398V424M1499.5,407V424M1503.5,425V439M1515.5,402V416M1527.5,395V412M1551.5,359V375M1555.5,373V409M1559.5,385V402M1563.5,389V415M1567.5,403V408M1571.5,392V409M1583.5,392V406M1587.5,408V423M1595.5,388V403M1599.5,395V405M1603.5,392V409M1607.5,400V418M1611.5,404V418M1615.5,411V425M1643.5,377V397M1647.5,396V403M1659.5,385V396M1683.5,378V382M1687.5,371V395M1695.5,375V396M1699.5,391V412M1711.5,382V405M1715.5,400V418M1719.5,398V411M1723.5,409V422M1727.5,398V418M1731.5,404V434M1735.5,417V436M1763.5,407V427M1767.5,413V432M1771.5,412V434M1775.5,412V439M1779.5,429V448M1783.5,426V448M1795.5,432V443M1823.5,420V432M1835.5,405V433M1839.5,421V446M1843.5,434V454M1855.5,397V427M1863.5,402V409M1867.5,394V405M1871.5,403V415" stroke="#00ff00" fill="none" stroke-width="1" shape-rendering="crispEdges"/>
<path d="M298,130h3V136h-3zM302,134h3V144h-3zM306,140h3V146h-3zM314,140h3V150h-3zM318,145h3V151h-3zM322,144h3V156h-3zM326,148h3V167h-3zM330,160h3V181h-3zM334,174h3V182h-3zM342,170h3V174h-3zM346,171h3V177h-3zM350,173h3V181h-3zM374,155h3V157h-3zM378,154h3V165h-3zM382,158h3V165h-3zM390,157h3V161h-3zM394,155h3V166h-3zM398,158h3V173h-3zM402,168h3V172h-3zM430,124h3V131h-3zM434,126h3V130h-3zM446,123h3V129h-3zM454,112h3V128h-3zM466,102h3V113h-3zM470,107h3V124h-3zM474,112h3V133h-3zM478,128h3V137h-3zM490,110h3V119h-3zM506,109h3V113h-3zM514,96h3V108h-3zM518,95h3V101h-3zM526,95h3V103h-3zM530,100h3V109h-3zM534,104h3V108h-3zM538,103h3V110h-3zM542,104h3V109h-3zM546,104h3V110h-3zM562,97h3V103h-3zM566,98h3V108h-3zM570,100h3V109h-3zM574,101h3V112h-3zM578,107h3V118h-3zM582,113h3V118h-3zM590,111h3V119h-3zM594,115h3V121h-3zM598,115h3V124h-3zM602,116h3V135h-3zM606,126h3V143h-3zM610,136h3V142h-3zM626,131h3V132h-3zM630,128h3V142h-3zM634,134h3V148h-3zM638,138h3V155h-3zM642,147h3V159h-3zM666,146h3V155h-3zM670,152h3V163h-3zM674,159h3V166h-3zM678,162h3V163h-3zM682,157h3V166h-3zM686,157h3V177h-3zM690,167h3V192h-3zM694,181h3V203h-3zM698,192h3V208h-3zM714,188h3V193h-3zM718,189h3V198h-3zM742,163h3V168h-3zM754,157h3V164h-3zM758,161h3V172h-3zM766,155h3V172h-3zM770,168h3V205h-3zM774,195h3V210h-3zM798,114h3V124h-3zM802,123h3V133h-3zM814,113h3V117h-3zM818,114h3V125h-3zM822,118h3V128h-3zM830,135h3V145h-3zM842,128h3V135h-3zM862,114h3V117h-3zM866,111h3V123h-3zM870,117h3V126h-3zM874,118h3V127h-3zM878,122h3V133h-3zM886,123h3V133h-3zM890,125h3V147h-3zM894,136h3V160h-3zM902,156h3V178h-3zM906,173h3V191h-3zM922,172h3V188h-3zM926,182h3V192h-3zM930,187h3V188h-3zM934,184h3V189h-3zM938,182h3V197h-3zM942,193h3V204h-3zM962,185h3V187h-3zM978,174h3V180h-3zM982,175h3V186h-3zM986,184h3V192h-3zM1006,166h3V171h-3zM1010,166h3V179h-3zM1014,172h3V182h-3zM1018,175h3V179h-3zM1022,175h3V184h-3zM1026,171h3V200h-3zM1030,191h3V225h-3zM1034,208h3V240h-3zM1038,234h3V252h-3zM1054,202h3V230h-3zM1058,228h3V257h-3zM1066,236h3V239h-3zM1070,235h3V251h-3zM1074,243h3V257h-3zM1078,250h3V266h-3zM1094,250h3V256h-3zM1098,253h3V255h-3zM1102,245h3V262h-3zM1106,259h3V287h-3zM1110,274h3V293h-3zM1114,285h3V298h-3zM1126,285h3V296h-3zM1130,294h3V310h-3zM1150,286h3V296h-3zM1158,285h3V297h-3zM1162,289h3V303h-3zM1166,296h3V311h-3zM1170,306h3V309h-3zM1190,290h3V300h-3zM1194,297h3V308h-3zM1198,299h3V306h-3zM1202,302h3V313h-3zM1206,306h3V315h-3zM1214,307h3V312h-3zM1234,294h3V300h-3zM1246,285h3V296h-3zM1250,293h3V304h-3zM1254,293h3V307h-3zM1258,301h3V316h-3zM1270,298h3V304h-3zM1274,297h3V309h-3zM1278,307h3V316h-3zM1310,294h3V302h-3zM1314,295h3V304h-3zM1318,297h3V310h-3zM1322,304h3V312h-3zM1334,300h3V302h-3zM1338,297h3V307h-3zM1342,302h3V310h-3zM1346,307h3V310h-3zM1354,302h3V310h-3zM1358,307h3V316h-3zM1362,310h3V315h-3zM1370,313h3V314h-3zM1382,308h3V318h-3zM1386,310h3V328h-3zM1390,319h3V334h-3zM1394,326h3V336h-3zM1398,330h3V338h-3zM1402,334h3V339h-3zM1406,332h3V340h-3zM1410,335h3V349h-3zM1414,344h3V348h-3zM1430,340h3V343h-3zM1442,329h3V334h-3zM1446,329h3V344h-3zM1454,332h3V344h-3zM1458,340h3V360h-3zM1462,347h3V365h-3zM1466,356h3V378h-3zM1470,369h3V391h-3zM1478,398h3V422h-3zM1490,390h3V411h-3zM1494,405h3V422h-3zM1498,407h3V424h-3zM1502,427h3V432h-3zM1514,403h3V412h-3zM1526,399h3V410h-3zM1550,359h3V374h-3zM1554,373h3V402h-3zM1558,387h3V401h-3zM1562,396h3V408h-3zM1566,405h3V407h-3zM1570,396h3V409h-3zM1582,392h3V405h-3zM1586,410h3V419h-3zM1594,395h3V403h-3zM1598,395h3V400h-3zM1602,393h3V406h-3zM1606,402h3V416h-3zM1610,405h3V416h-3zM1614,413h3V423h-3zM1642,384h3V397h-3zM1646,397h3V403h-3zM1658,385h3V393h-3zM1682,378h3V381h-3zM1686,378h3V394h-3zM1694,379h3V392h-3zM1698,391h3V412h-3zM1710,386h3V401h-3zM1714,402h3V417h-3zM1718,402h3V409h-3zM1722,409h3V415h-3zM1726,400h3V411h-3zM1730,406h3V427h-3zM1734,420h3V429h-3zM1762,409h3V420h-3zM1766,413h3V427h-3zM1770,419h3V429h-3zM1774,416h3V434h-3zM1778,430h3V446h-3zM1782,431h3V447h-3zM1794,432h3V442h-3zM1822,425h3V429h-3zM1834,410h3V429h-3zM1838,422h3V444h-3zM1842,438h3V452h-3zM1854,398h3V427h-3zM1862,402h3V409h-3zM1866,398h3V405h-3zM1870,403h3V414h-3z" fill="#00ff00" stroke="none" shape-rendering="crispEdges"/>
<path d="M1873,104.5h4" stroke="#fff"/>
<text x="1878" y="108" class="ax">22447.0</text>
<path d="M1873,137.5h4" stroke="#fff"/>
<text x="1878" y="141" class="ax">22307.0</text>
<path d="M1873,170.5h4" stroke="#fff"/>
<text x="1878" y="174" class="ax">22171.0</text>
<path d="M1873,203.5h4" stroke="#fff"/>
<text x="1878" y="207" class="ax">22031.0</text>
<path d="M1873,236.5h4" stroke="#fff"/>
<text x="1878" y="240" class="ax">21895.0</text>
<path d="M1873,269.5h4" stroke="#fff"/>
<text x="1878" y="273" class="ax">21755.0</text>
<path d="M1873,302.5h4" stroke="#fff"/>
<text x="1878" y="306" class="ax">21619.0</text>
<path d="M1873,335.5h4" stroke="#fff"/>
<text x="1878" y="339" class="ax">21479.0</text>
<path d="M1873,368.5h4" stroke="#fff"/>
<text x="1878" y="372" class="ax">21339.0</text>
<path d="M1873,401.5h4" stroke="#fff"/>
<text x="1878" y="405" class="ax">21203.0</text>
<path d="M1873,434.5h4" stroke="#fff"/>
<text x="1878" y="438" class="ax">21063.0</text>
<path d="M1873,467.5h4" stroke="#fff"/>
<text x="1878" y="471" class="ax">20927.0</text>
<path d="M291.5,470v4" stroke="#fff"/>
<text x="290" y="482.5" class="ax">30 Mar 2020</text>
<path d="M355.5,470v4" stroke="#fff"/>
<text x="354" y="482.5" class="ax">31 Mar 01:05</text>
<path d="M419.5,470v4" stroke="#fff"/>
<text x="418" y="482.5" class="ax">31 Mar 02:25</text>
<path d="M483.5,470v4" stroke="#fff"/>
<text x="482" y="482.5" class="ax">31 Mar 03:45</text>
<path d="M547.5,470v4" stroke="#fff"/>
<text x="546" y="482.5" class="ax">31 Mar 05:05</text>
<path d="M611.5,470v4" stroke="#fff"/>
<text x="610" y="482.5" class="ax">31 Mar 06:25</text>
<path d="M675.5,470v4" stroke="#fff"/>
<text x="674" y="482.5" class="ax">31 Mar 07:45</text>
<path d="M739.5,470v4" stroke="#fff"/>
<text x="738" y="482.5" class="ax">31 Mar 09:05</text>
<path d="M803.5,470v4" stroke="#fff"/>
<text x="802" y="482.5" class="ax">31 Mar 10:25</text>
<path d="M867.5,470v4" stroke="#fff"/>
<text x="866" y="482.5" class="ax">31 Mar 11:45</text>
<path d="M931.5,470v4" stroke="#fff"/>
<text x="930" y="482.5" class="ax">31 Mar 13:05</text>
<path d="M995.5,470v4" stroke="#fff"/>
<text x="994" y="482.5" class="ax">31 Mar 14:25</text>
<path d="M1059.5,470v4" stroke="#fff"/>
<text x="1058" y="482.5" class="ax">31 Mar 15:45</text>
<path d="M1123.5,470v4" stroke="#fff"/>
<text x="1122" y="482.5" class="ax">31 Mar 18:21</text>
<path d="M1187.5,470v4" stroke="#fff"/>
<text x="1186" y="482.5" class="ax">31 Mar 19:41</text>
<path d="M1251.5,470v4" stroke="#fff"/>
<text x="1250" y="482.5" class="ax">31 Mar 21:01</text>
<path d="M1315.5,470v4" stroke="#fff"/>
<text x="1314" y="482.5" class="ax">31 Mar 22:21</text>
<path d="M1379.5,470v4" stroke="#fff"/>
<text x="1378" y="482.5" class="ax">31 Mar 23:41</text>
<path d="M1443.5,470v4" stroke="#fff"/>
<text x="1442" y="482.5" class="ax">1 Apr 01:00</text>
<path d="M1507.5,470v4" stroke="#fff"/>
<text x="1506" y="482.5" class="ax">1 Apr 02:20</text>
<path d="M1571.5,470v4" stroke="#fff"/>
<text x="1570" y="482.5" class="ax">1 Apr 03:40</text>
<path d="M1635.5,470v4" stroke="#fff"/>
<text x="1634" y="482.5" class="ax">1 Apr 05:00</text>
<path d="M1699.5,470v4" stroke="#fff"/>
<text x="1698" y="482.5" class="ax">1 Apr 06:20</text>
<path d="M1763.5,470v4" stroke="#fff"/>
<text x="1762" y="482.5" class="ax">1 Apr 07:40</text>
<path d="M1827.5,470v4" stroke="#fff"/>
<text x="1826" y="482.5" class="ax">1 Apr 09:00</text>
</svg>
<!-- chart tabs -->
<div id="ctabs"></div>
<div class="abs" style="left:287px;top:494px;width:1px;height:17px;background:#555"></div>
<div class="ctab" style="left:303px">USDCHF,M5</div>
<div class="ctab" style="left:394px">GBPUSD,M5</div>
<div class="ctab" style="left:486px">EURUSD,M5</div>
<div class="ctab" style="left:579px">USOIL,M5</div>
<div class="ctab" style="left:660px">CAC40,M5</div>
<div class="ctab" style="left:743px">DAX30,M5</div>
<div class="ctab act" style="left:816px;width:75px"><span>WS30,M5</span></div>
<div class="ctab" style="left:904px">NAS100,M5</div>
<div class="ctab" style="left:996px">XAUUSD,M5</div>
<div class="ctab" style="left:1092px">HSI50,M5</div>
<div class="ctab" style="left:1171px">UK100,H1</div>
<div class="ctab" style="left:1252px">GBPUSD,H1</div>
<div class="csep" style="left:384px"></div>
<div class="csep" style="left:476px"></div>
<div class="csep" style="left:568px"></div>
<div class="csep" style="left:649px"></div>
<div class="csep" style="left:732px"></div>
<div class="csep" style="left:896px"></div>
<div class="csep" style="left:985px"></div>
<div class="csep" style="left:1081px"></div>
<div class="csep" style="left:1160px"></div>
<div class="csep" style="left:1241px"></div>
<div class="csep" style="left:1332px"></div>
<svg class="abs" style="left:1886px;top:498px" width="30" height="9"><path d="M5.5,0.5v8l-4,-4z M21,0.5v8l4,-4z" fill="#9a9a9a"/></svg>
<!-- terminal -->
<div id="term"></div>
<div class="abs" style="left:3px;top:517px;font-size:13px;font-weight:bold;line-height:12px">×</div>
<div class="abs" style="left:1px;top:531px;width:13px;height:137px;background:linear-gradient(90deg,#b6c9e2,#a9bfdc)"></div>
<div class="abs" style="left:15px;top:518px;width:1886px;height:150px;background:#fff;border:1px solid #8e8e8e;border-bottom:none"></div>
<div class="th" style="left:16px;width:138px;text-align:left;padding-left:5px">订单</div>
<div class="th" style="left:154px;width:235px;text-align:right;padding-right:4px">时间</div>
<div class="th" style="left:389px;width:106px;text-align:right;padding-right:4px">类型</div>
<div class="th" style="left:495px;width:86px;text-align:right;padding-right:4px">手数</div>
<div class="th" style="left:581px;width:106px;text-align:right;padding-right:4px">交易品种</div>
<div class="th" style="left:687px;width:106px;text-align:right;padding-right:4px">价格</div>
<div class="th" style="left:793px;width:106px;text-align:right;padding-right:4px">止损</div>
<div class="th" style="left:899px;width:106px;text-align:right;padding-right:4px">止盈</div>
<div class="th" style="left:1005px;width:235px;text-align:right;padding-right:6px">时间<svg width="9" height="7" viewBox="0 0 9 7" style="display:inline-block;margin-left:12px;vertical-align:0px"><path d="M1.5,1.5 H7.5 L4.5,6 Z" fill="#f4f4f4" stroke="#a0a0a0" stroke-width="1"/></svg></div>
<div class="th" style="left:1240px;width:106px;text-align:right;padding-right:4px">价格</div>
<div class="th" style="left:1346px;width:106px;text-align:right;padding-right:4px">库存费</div>
<div class="th" style="left:1452px;width:116px;text-align:right;padding-right:4px">获利</div>
<div class="th" style="left:1568px;width:332px;text-align:right;padding-right:4px">注释</div>
<div class="tr" style="top:543px;background:#ffffff;color:#000">
<div class="td" style="left:0px;width:138px;text-align:left"><svg class="ti" width="14" height="16" viewBox="0 0 14 16"><rect x="0.5" y="0.5" width="12" height="14" rx="1.5" fill="#fff" stroke="#888"/><path d="M6.5,11.5 L9.7,8.2 H7.9 V4.5 H5.1 V8.2 H3.3 Z" fill="#ff4a1a" stroke="#b02000" stroke-width="0.8"/></svg><span style="position:absolute;left:22px">5614919</span></div>
<div class="td" style="left:138px;width:235px">2020.05.05 03:55:09</div>
<div class="td tx13" style="left:373px;width:106px">balance</div>
<div class="td" style="left:479px;width:86px;border-right-color:transparent"></div>
<div class="td tx13" style="left:565px;width:106px;border-right-color:transparent"></div>
<div class="td" style="left:671px;width:106px;border-right-color:transparent"></div>
<div class="td" style="left:777px;width:106px;border-right-color:transparent"></div>
<div class="td" style="left:883px;width:106px;border-right-color:transparent"></div>
<div class="td" style="left:989px;width:235px;border-right-color:transparent"></div>
<div class="td" style="left:1224px;width:106px;border-right-color:transparent"></div>
<div class="td" style="left:1330px;width:106px"></div>
<div class="td" style="left:1436px;width:116px">-757.86</div>
<div class="td" style="left:1552px;width:332px;font-size:12.6px"><span class="note" style="left:10px;font-size:16px;top:-1px">只允许出本金</span>WTH/ALO/USD/W200504854366Rz</div>
</div>
<div class="tr" style="top:564px;background:#ededed;color:#000">
<div class="td" style="left:0px;width:138px;text-align:left"><svg class="ti" width="16" height="17" viewBox="0 0 16 17"><path d="M1.5,1.5 H8.5 L12.5,5.5 V15.5 H1.5 Z" fill="#fff" stroke="#555"/><path d="M8.5,1.5 V5.5 H12.5" fill="none" stroke="#555"/><circle cx="11.5" cy="13" r="3.2" fill="#3aa0f0" stroke="#1060b0" stroke-width="0.8"/></svg><span style="position:absolute;left:22px">5610859</span></div>
<div class="td" style="left:138px;width:235px">2020.05.04 04:20:44</div>
<div class="td tx13" style="left:373px;width:106px">buy</div>
<div class="td" style="left:479px;width:86px">1.00</div>
<div class="td tx13" style="left:565px;width:106px">hsi50</div>
<div class="td" style="left:671px;width:106px">23448.5</div>
<div class="td" style="left:777px;width:106px">0.0</div>
<div class="td" style="left:883px;width:106px">0.0</div>
<div class="td" style="left:989px;width:235px">2020.05.04 05:17:10</div>
<div class="td" style="left:1224px;width:106px">23386.0</div>
<div class="td" style="left:1330px;width:106px">0.00</div>
<div class="td" style="left:1436px;width:116px">-8.06</div>
<div class="td" style="left:1552px;width:332px"></div>
</div>
<div class="tr sel" style="top:585px;background:#3399ff;color:#fff">
<div style="position:absolute;left:0;top:-1px;width:100%;height:1px;background:#3399ff"></div>
<div class="td" style="left:0px;width:138px;text-align:left"><svg class="ti" width="14" height="16" viewBox="0 0 14 16"><rect x="0.5" y="0.5" width="12" height="14" rx="1.5" fill="#fff" stroke="#888"/><path d="M6.5,11.5 L9.7,8.2 H7.9 V4.5 H5.1 V8.2 H3.3 Z" fill="#ff4a1a" stroke="#b02000" stroke-width="0.8"/></svg><span style="position:absolute;left:22px">5610863</span></div>
<div class="td" style="left:138px;width:235px">2020.05.04 04:21:58</div>
<div class="td tx13" style="left:373px;width:106px">balance</div>
<div class="td" style="left:479px;width:86px;border-right-color:transparent"></div>
<div class="td tx13" style="left:565px;width:106px;border-right-color:transparent"></div>
<div class="td" style="left:671px;width:106px;border-right-color:transparent"></div>
<div class="td" style="left:777px;width:106px;border-right-color:transparent"></div>
<div class="td" style="left:883px;width:106px;border-right-color:transparent"></div>
<div class="td" style="left:989px;width:235px;border-right-color:transparent"></div>
<div class="td" style="left:1224px;width:106px;border-right-color:transparent"></div>
<div class="td" style="left:1330px;width:106px"></div>
<div class="td" style="left:1436px;width:116px">-8 330.76</div>
<div class="td" style="left:1552px;width:332px;font-size:12.6px"><span class="note" style="left:-1px;font-size:21px;top:-2px">平仓20多分钟,盈利全部扣除</span>ADJ\HSI50</div>
</div>
<div class="tr" style="top:606px;background:#ededed;color:#000">
<div class="td" style="left:0px;width:138px;text-align:left"><svg class="ti" width="16" height="17" viewBox="0 0 16 17"><path d="M1.5,1.5 H8.5 L12.5,5.5 V15.5 H1.5 Z" fill="#fff" stroke="#555"/><path d="M8.5,1.5 V5.5 H12.5" fill="none" stroke="#555"/><circle cx="11.5" cy="13" r="3.2" fill="#ff5a1a" stroke="#b02800" stroke-width="0.8"/></svg><span style="position:absolute;left:22px">5596464</span></div>
<div class="td" style="left:138px;width:235px">2020.04.29 12:56:58</div>
<div class="td tx13" style="left:373px;width:106px">sell</div>
<div class="td" style="left:479px;width:86px">20.00</div>
<div class="td tx13" style="left:565px;width:106px">hsi50</div>
<div class="td" style="left:671px;width:106px">24839.5</div>
<div class="td" style="left:777px;width:106px">0.0</div>
<div class="td" style="left:883px;width:106px">23151.2</div>
<div class="td" style="left:989px;width:235px">2020.05.04 03:55:35</div>
<div class="td" style="left:1224px;width:106px">23549.0</div>
<div class="td" style="left:1330px;width:106px">-2.79</div>
<div class="td" style="left:1436px;width:116px">3 329.16</div>
<div class="td" style="left:1552px;width:332px"></div>
</div>
<div class="tr" style="top:627px;background:#ffffff;color:#000">
<div class="td" style="left:0px;width:138px;text-align:left"><svg class="ti" width="16" height="17" viewBox="0 0 16 17"><path d="M1.5,1.5 H8.5 L12.5,5.5 V15.5 H1.5 Z" fill="#fff" stroke="#555"/><path d="M8.5,1.5 V5.5 H12.5" fill="none" stroke="#555"/><circle cx="11.5" cy="13" r="3.2" fill="#ff5a1a" stroke="#b02800" stroke-width="0.8"/></svg><span style="position:absolute;left:22px">5596466</span></div>
<div class="td" style="left:138px;width:235px">2020.04.29 12:57:24</div>
<div class="td tx13" style="left:373px;width:106px">sell</div>
<div class="td" style="left:479px;width:86px">20.00</div>
<div class="td tx13" style="left:565px;width:106px">hsi50</div>
<div class="td" style="left:671px;width:106px">24840.5</div>
<div class="td" style="left:777px;width:106px">0.0</div>
<div class="td" style="left:883px;width:106px">23200.0</div>
<div class="td" style="left:989px;width:235px">2020.05.04 03:55:32</div>
<div class="td" style="left:1224px;width:106px">23541.0</div>
<div class="td" style="left:1330px;width:106px">-2.79</div>
<div class="td" style="left:1436px;width:116px">3 352.38</div>
<div class="td" style="left:1552px;width:332px"></div>
</div>
<div class="tr" style="top:648px;background:#ededed;color:#000">
<div class="td" style="left:0px;width:138px;text-align:left"><svg class="ti" width="16" height="17" viewBox="0 0 16 17"><path d="M1.5,1.5 H8.5 L12.5,5.5 V15.5 H1.5 Z" fill="#fff" stroke="#555"/><path d="M8.5,1.5 V5.5 H12.5" fill="none" stroke="#555"/><circle cx="11.5" cy="13" r="3.2" fill="#ff5a1a" stroke="#b02800" stroke-width="0.8"/></svg><span style="position:absolute;left:22px">5596477</span></div>
<div class="td" style="left:138px;width:235px">2020.04.29 12:58:17</div>
<div class="td tx13" style="left:373px;width:106px">sell</div>
<div class="td" style="left:479px;width:86px">10.00</div>
<div class="td tx13" style="left:565px;width:106px">hsi50</div>
<div class="td" style="left:671px;width:106px">24825.5</div>
<div class="td" style="left:777px;width:106px">0.0</div>
<div class="td" style="left:883px;width:106px">23260.4</div>
<div class="td" style="left:989px;width:235px">2020.05.04 03:55:30</div>
<div class="td" style="left:1224px;width:106px">23541.5</div>
<div class="td" style="left:1330px;width:106px">-1.40</div>
<div class="td" style="left:1436px;width:116px">1 656.20</div>
<div class="td" style="left:1552px;width:332px"></div>
</div>
<div class="sb" style="left:1900px;top:519px;width:19px;height:149px;border-left:1px solid #e0e0e0"></div>
<svg class="abs" style="left:1905px;top:526px" width="9" height="6"><path d="M0.5,5 L4.5,1 L8.5,5 Z" fill="#555"/></svg>
<div class="thumb" style="left:1901px;top:537px;width:17px;height:140px"></div>
<div class="rb" style="left:243px;top:578px;width:180px;height:32px"></div>
<div class="rb" style="left:1104px;top:604px;width:158px;height:64px"></div>
<svg class="wm" width="1920" height="668" viewBox="0 0 1920 668"><defs><clipPath id="wmc"><rect x="0" y="10" width="1920" height="658"/></clipPath></defs><g clip-path="url(#wmc)" fill="#b1b1b1" fill-opacity="0.4" fill-rule="evenodd"><path transform="translate(82.0,-32.0) rotate(-15)" d="M0,0 C12,16 36,23 72,22 C82,64 80,124 0,168 C-80,124 -82,64 -72,22 C-36,23 -12,16 0,0 Z M-13,42 h26 v29 h29 v26 h-29 v29 h-26 v-29 h-29 v-26 h29 z"/><path transform="translate(462.2,-134.3) rotate(-15)" d="M0,0 C12,16 36,23 72,22 C82,64 80,124 0,168 C-80,124 -82,64 -72,22 C-36,23 -12,16 0,0 Z M-13,42 h26 v29 h29 v26 h-29 v29 h-26 v-29 h-29 v-26 h29 z"/><path transform="translate(185.6,355.2) rotate(-15)" d="M0,0 C12,16 36,23 72,22 C82,64 80,124 0,168 C-80,124 -82,64 -72,22 C-36,23 -12,16 0,0 Z M-13,42 h26 v29 h29 v26 h-29 v29 h-26 v-29 h-29 v-26 h29 z"/><path transform="translate(565.8,252.9) rotate(-15)" d="M0,0 C12,16 36,23 72,22 C82,64 80,124 0,168 C-80,124 -82,64 -72,22 C-36,23 -12,16 0,0 Z M-13,42 h26 v29 h29 v26 h-29 v29 h-26 v-29 h-29 v-26 h29 z"/><path transform="translate(946.1,151.0) rotate(-15)" d="M0,0 C12,16 36,23 72,22 C82,64 80,124 0,168 C-80,124 -82,64 -72,22 C-36,23 -12,16 0,0 Z M-13,42 h26 v29 h29 v26 h-29 v29 h-26 v-29 h-29 v-26 h29 z"/><path transform="translate(1326.1,48.2) rotate(-15)" d="M0,0 C12,16 36,23 72,22 C82,64 80,124 0,168 C-80,124 -82,64 -72,22 C-36,23 -12,16 0,0 Z M-13,42 h26 v29 h29 v26 h-29 v29 h-26 v-29 h-29 v-26 h29 z"/><path transform="translate(1708.8,-54.1) rotate(-15)" d="M0,0 C12,16 36,23 72,22 C82,64 80,124 0,168 C-80,124 -82,64 -72,22 C-36,23 -12,16 0,0 Z M-13,42 h26 v29 h29 v26 h-29 v29 h-26 v-29 h-29 v-26 h29 z"/><path transform="translate(835.6,595.0) rotate(-15)" d="M0,0 C12,16 36,23 72,22 C82,64 80,124 0,168 C-80,124 -82,64 -72,22 C-36,23 -12,16 0,0 Z M-13,42 h26 v29 h29 v26 h-29 v29 h-26 v-29 h-29 v-26 h29 z"/><path transform="translate(1215.8,492.7) rotate(-15)" d="M0,0 C12,16 36,23 72,22 C82,64 80,124 0,168 C-80,124 -82,64 -72,22 C-36,23 -12,16 0,0 Z M-13,42 h26 v29 h29 v26 h-29 v29 h-26 v-29 h-29 v-26 h29 z"/><path transform="translate(1596.0,390.4) rotate(-15)" d="M0,0 C12,16 36,23 72,22 C82,64 80,124 0,168 C-80,124 -82,64 -72,22 C-36,23 -12,16 0,0 Z M-13,42 h26 v29 h29 v26 h-29 v29 h-26 v-29 h-29 v-26 h29 z"/><path transform="translate(1976.2,288.1) rotate(-15)" d="M0,0 C12,16 36,23 72,22 C82,64 80,124 0,168 C-80,124 -82,64 -72,22 C-36,23 -12,16 0,0 Z M-13,42 h26 v29 h29 v26 h-29 v29 h-26 v-29 h-29 v-26 h29 z"/></g></svg>
</body>
</html>
